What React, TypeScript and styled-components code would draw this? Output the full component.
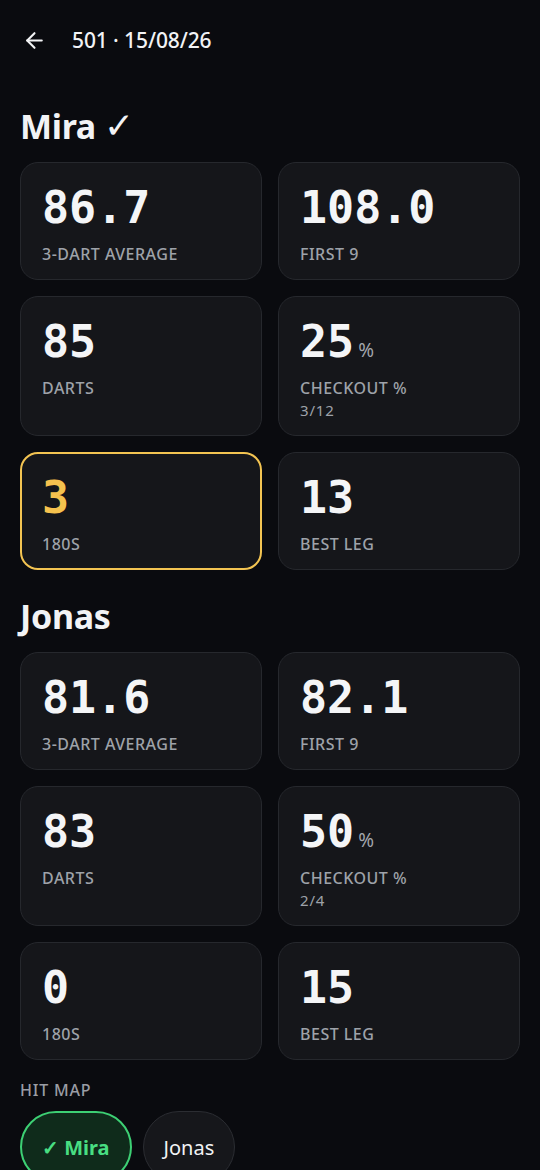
import styled, { createGlobalStyle, css } from "styled-components";
import { ArrowLeft } from "lucide-react";

const GlobalStyle = createGlobalStyle`
  html, body {
    margin: 0;
    padding: 0;
    background: #0a0b0f;
  }
  body {
    font-family: "Noto Sans", "Open Sans", sans-serif;
    color: #f2f3f5;
  }
`;

const Page = styled.div`
  width: 540px;
  height: 1170px;
  box-sizing: border-box;
  padding: 0 20px;
  background: #0a0b0f;
  overflow: hidden;
`;

const TopBar = styled.div`
  height: 80px;
  display: flex;
  align-items: center;
  gap: 25px;
  padding-left: 2px;
`;

const BackButton = styled.button`
  background: none;
  border: none;
  padding: 0;
  color: #f2f3f5;
  display: flex;
  align-items: center;
`;

const Title = styled.div`
  font-size: 21px;
  font-weight: 500;
  letter-spacing: -0.1px;
`;

const PlayerName = styled.h2`
  margin: 28px 0 18px;
  display: flex;
  align-items: center;
  font-size: 34px;
  line-height: 36px;
  font-weight: 700;
  letter-spacing: -0.3px;
`;

const Check = styled.span`
  font-family: "DejaVu Sans", sans-serif;
  font-weight: 400;
  font-size: 36px;
  line-height: 36px;
  margin-left: 8px;
`;

const Grid = styled.div`
  display: grid;
  grid-template-columns: 1fr 1fr;
  gap: 16px;
`;

const Card = styled.div<{ $highlight?: boolean }>`
  box-sizing: border-box;
  background: #15161a;
  border: 1px solid #26282d;
  border-radius: 18px;
  padding: 21px 21px 15px;
  ${(p) =>
    p.$highlight &&
    css`
      border: 2px solid #f3c452;
      padding: 20px 20px 14px;
    `}
`;

const Value = styled.div<{ $highlight?: boolean }>`
  display: flex;
  align-items: baseline;
  height: 47px;
  font-family: "DejaVu Sans Mono", "Liberation Mono", monospace;
  font-weight: 700;
  font-size: 45px;
  line-height: 47px;
  color: ${(p) => (p.$highlight ? "#f5c24e" : "#f4f5f7")};
`;

const Unit = styled.span`
  font-family: "Noto Sans", sans-serif;
  font-weight: 400;
  font-size: 19px;
  line-height: 20px;
  color: #a3a7ae;
  margin-left: 4px;
`;

const Label = styled.div`
  margin-top: 13px;
  font-size: 16px;
  line-height: 20px;
  font-weight: 500;
  letter-spacing: 0.5px;
  color: #9ea2a9;
  text-transform: uppercase;
`;

const Sub = styled.div`
  margin-top: 2px;
  font-size: 15px;
  line-height: 20px;
  letter-spacing: 0.8px;
  color: #9ea2a9;
`;

const SectionLabel = styled.div`
  margin-top: 20px;
  font-size: 16px;
  line-height: 20px;
  font-weight: 500;
  letter-spacing: 0.8px;
  color: #9a9da4;
`;

const Chips = styled.div`
  display: flex;
  gap: 11px;
  margin-top: 11px;
`;

const Chip = styled.button<{ $active?: boolean }>`
  box-sizing: border-box;
  height: 72px;
  padding: 0 20px;
  border-radius: 36px;
  font-family: "Noto Sans", sans-serif;
  font-size: 20px;
  ${(p) =>
    p.$active
      ? css`
          background: #0f2b1b;
          border: 2px solid #3dd074;
          color: #48de82;
          font-weight: 700;
        `
      : css`
          background: #16171b;
          border: 1px solid #2b2d32;
          color: #f2f3f5;
          font-weight: 400;
        `}
`;

type Stat = {
  value: string;
  unit?: string;
  label: string;
  sub?: string;
  highlight?: boolean;
};

type Player = { name: string; winner?: boolean; stats: Stat[] };

const players: Player[] = [
  {
    name: "Mira",
    winner: true,
    stats: [
      { value: "86.7", label: "3-Dart Average" },
      { value: "108.0", label: "First 9" },
      { value: "85", label: "Darts" },
      { value: "25", unit: "%", label: "Checkout %", sub: "3/12" },
      { value: "3", label: "180s", highlight: true },
      { value: "13", label: "Best Leg" },
    ],
  },
  {
    name: "Jonas",
    stats: [
      { value: "81.6", label: "3-Dart Average" },
      { value: "82.1", label: "First 9" },
      { value: "83", label: "Darts" },
      { value: "50", unit: "%", label: "Checkout %", sub: "2/4" },
      { value: "0", label: "180s" },
      { value: "15", label: "Best Leg" },
    ],
  },
];

export default function App() {
  return (
    <>
      <GlobalStyle />
      <Page>
        <TopBar>
          <BackButton aria-label="Back">
            <ArrowLeft size={25} strokeWidth={2} />
          </BackButton>
          <Title>501 · 15/08/26</Title>
        </TopBar>

        {players.map((player) => (
          <div key={player.name}>
            <PlayerName>
              {player.name}
              {player.winner && <Check>✓</Check>}
            </PlayerName>
            <Grid>
              {player.stats.map((s) => (
                <Card key={s.label} $highlight={s.highlight}>
                  <Value $highlight={s.highlight}>
                    {s.value}
                    {s.unit && <Unit>{s.unit}</Unit>}
                  </Value>
                  <Label>{s.label}</Label>
                  {s.sub && <Sub>{s.sub}</Sub>}
                </Card>
              ))}
            </Grid>
          </div>
        ))}

        <SectionLabel>HIT MAP</SectionLabel>
        <Chips>
          <Chip $active>✓ Mira</Chip>
          <Chip>Jonas</Chip>
        </Chips>
      </Page>
    </>
  );
}
